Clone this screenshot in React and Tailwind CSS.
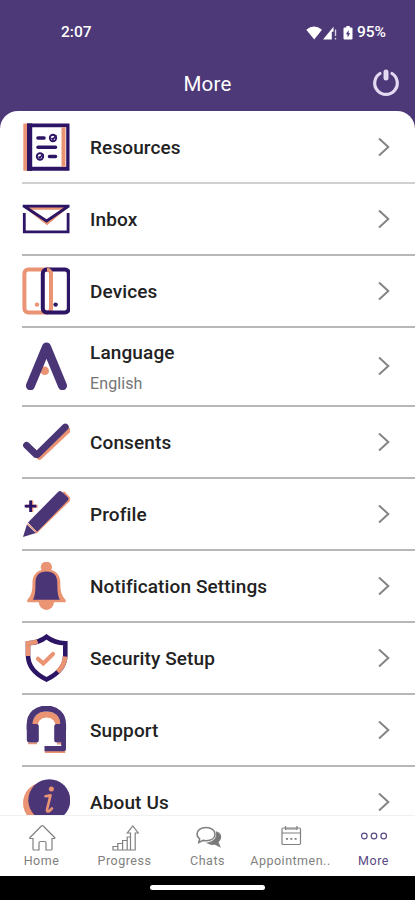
const PURPLE = '#4a3577'
const DARK = '#2d1565'
const ORANGE = '#ea9474'

function ResourcesIcon() {
  return (
    <svg viewBox="0 0 48 48" className="size-12" fill="none">
      <path d="M1.3 0.5h5v47.3h-5z" fill={ORANGE} />
      <path d="M6.5 2.4h39.2v43.2H6.5z" fill="#fff" />
      <path d="M5 0.5h42.5v47.3H5zM9.6 4.2v39.6h34.6V4.2z" fill={DARK} fillRule="evenodd" />
      <path d="M39.5 4.2h4v39.6h-4z" fill={ORANGE} />
      <path d="M5 0.5h5.2v47.3H5z" fill={DARK} />
      <g stroke={DARK} strokeWidth="3.6" strokeLinecap="round">
        <path d="M16 15h6M16 24.3h17.5M27.5 33.5h6" />
      </g>
      <circle cx="31" cy="15" r="3.2" stroke={DARK} strokeWidth="1.9" />
      <path d="M29.5 15l1.4 1.3 3.4-4" stroke={DARK} strokeWidth="1.6" />
      <circle cx="18" cy="33.5" r="3.2" stroke={DARK} strokeWidth="1.9" />
      <path d="M16.5 33.5l1.4 1.3 3.4-4" stroke={DARK} strokeWidth="1.6" />
    </svg>
  )
}

function InboxIcon() {
  return (
    <svg viewBox="0 0 48 48" className="size-12" fill="none">
      <path d="M5 12.8h38.5L25 28.4z" stroke={ORANGE} strokeWidth="3" />
      <path d="M9 13.8h30" stroke={ORANGE} strokeWidth="1.8" />
      <path d="M0.7 11.2h46.8M2.5 11.5L24.6 26 46 11.5" stroke={DARK} strokeWidth="2.8" />
      <path d="M2.3 18v18.8h43.8V18" stroke={DARK} strokeWidth="2.8" />
    </svg>
  )
}

function DevicesIcon() {
  return (
    <svg viewBox="0 0 48 48" className="size-12" fill="none">
      <rect x="2.4" y="2.6" width="26.6" height="42.8" rx="3.8" stroke={ORANGE} strokeWidth="4" />
      <rect x="20.8" y="2.6" width="26" height="42.8" rx="3.8" stroke={DARK} strokeWidth="4" />
      <path d="M25 2.6a4 4 0 0 1 4 4v32" stroke={ORANGE} strokeWidth="3.6" />
      <circle cx="15" cy="37.6" r="2.2" fill={ORANGE} />
      <circle cx="33.6" cy="37.6" r="2.2" fill={DARK} />
    </svg>
  )
}

function LanguageIcon() {
  return (
    <svg viewBox="0 0 48 48" className="size-12" fill="none">
      <circle cx="22.7" cy="28.8" r="4.3" fill={ORANGE} />
      <path d="M8.4 43.8L24.5 5l16 38.8" stroke={PURPLE} strokeWidth="9" strokeLinecap="round" strokeLinejoin="round" />
    </svg>
  )
}

function ConsentsIcon() {
  return (
    <svg viewBox="0 0 48 48" className="size-12" fill="none" strokeLinecap="round" strokeLinejoin="round">
      <path d="M10 32l7.5 7L45.7 12.3" stroke={ORANGE} strokeWidth="5.8" />
      <path d="M4.5 27.3l9.5 9.2h1.4L43.3 9" stroke={PURPLE} strokeWidth="6.8" />
    </svg>
  )
}

function ProfileIcon() {
  return (
    <svg viewBox="0 0 48 48" className="size-12" fill="none">
      <path d="M14 42.5L46.5 11q1.8-1.9 0-3.8L42 2.5z" fill={ORANGE} stroke={ORANGE} strokeWidth="2" strokeLinejoin="round" />
      <path d="M6 32.5L36 2q2-1.9 4 0l5.5 5q1.9 1.8 0 3.8L15 42z" fill={PURPLE} />
      <path d="M4.9 34.5l9 8.6L1 47z" fill={PURPLE} />
      <path d="M5.6 33.7l9.3 8.8" stroke={ORANGE} strokeWidth="1.2" />
      <path d="M9.8 10.5v11.4M4 16.2h11.6" stroke={ORANGE} strokeWidth="3" />
      <path d="M8.6 10.5v11.4M2.7 16.2h11.6" stroke={DARK} strokeWidth="2.8" />
    </svg>
  )
}

function BellIcon() {
  return (
    <svg viewBox="0 0 48 48" className="size-12" fill="none">
      <circle cx="24.4" cy="5.3" r="5.6" fill={ORANGE} />
      <path d="M10.5 20.5C10.5 12 16 7.5 24.4 7.5S38.3 12 38.3 20.5c0 9 1.2 13 5.4 17.5v2.3H5.2V38c4.2-4.5 5.3-8.5 5.3-17.5z" fill={ORANGE} />
      <path d="M16.8 40a7.6 7.9 0 0 0 15.2 0z" fill={ORANGE} />
      <path d="M13.5 20.5c0-7.2 4-11 10.9-11s10.9 3.8 10.9 11c0 8 .4 13.5 2.6 17.3H11c2.1-3.8 2.5-9.3 2.5-17.3z" fill={PURPLE} />
    </svg>
  )
}

function SecurityIcon() {
  return (
    <svg viewBox="0 0 48 48" className="size-12" fill="none" strokeWidth="4.6">
      <path d="M24.5 2.8C19 7 13 9 6 9.3V21c0 12.5 8 19.5 18.5 24.5C35 40.5 43.3 33.5 43.3 21V9.3C36 9 30 7 24.5 2.8z" stroke={DARK} />
      <path d="M15.5 7.3C12 8.7 9 9.2 6 9.3V22" stroke={ORANGE} />
      <path d="M43.2 22.5c-.4 6.5-3 11-7.5 15.3" stroke={ORANGE} />
      <path d="M16 24.8l5.3 4.7 9.7-9.5" stroke={ORANGE} strokeWidth="4.2" strokeLinecap="round" />
    </svg>
  )
}

function SupportIcon() {
  return (
    <svg viewBox="0 0 48 48" className="size-12" fill="none">
      <path d="M12.5 22C12.5 12.5 17 8.5 24.5 8.5S36.8 12.5 36.8 22" stroke={ORANGE} strokeWidth="6" />
      <path d="M6 36.5h9v1.8H6zM22.8 44.5h20.5v2.4H22.8zM35 36.8h6v1.8h-6z" fill={ORANGE} />
      <path d="M7.6 24V18.5C7.6 8.5 14.5 2.5 24.5 2.5s16.7 6 16.7 16V24" stroke={PURPLE} strokeWidth="5.8" />
      <path d="M4.8 18h9.5a2.5 2.5 0 0 1 2.5 2.5V34a2.5 2.5 0 0 1-2.5 2.5H7A2.5 2.5 0 0 1 4.8 34z" fill={PURPLE} />
      <path d="M44 18h-9.3a2.5 2.5 0 0 0-2.5 2.5V34a2.5 2.5 0 0 0 2.5 2.5h4.5v3.5H22.5v5.3h19a2.5 2.5 0 0 0 2.5-2.5z" fill={PURPLE} />
    </svg>
  )
}

function AboutIcon() {
  return (
    <svg viewBox="0 0 48 48" className="size-12" fill="none">
      <circle cx="21.5" cy="25" r="20.5" fill={ORANGE} />
      <circle cx="27.3" cy="22.2" r="21" fill={PURPLE} />
      <circle cx="29.4" cy="11" r="2.5" fill={ORANGE} />
      <path
        d="M23.5 18.2l5-.8-3.4 13.8q-.6 2.6 1.2 2.2 1.7-.5 3.7-3"
        stroke={ORANGE}
        strokeWidth="2.6"
        strokeLinecap="round"
        strokeLinejoin="round"
      />
    </svg>
  )
}

const items = [
  { label: 'Resources', Icon: ResourcesIcon },
  { label: 'Inbox', Icon: InboxIcon },
  { label: 'Devices', Icon: DevicesIcon },
  { label: 'Language', sub: 'English', Icon: LanguageIcon },
  { label: 'Consents', Icon: ConsentsIcon },
  { label: 'Profile', Icon: ProfileIcon },
  { label: 'Notification Settings', Icon: BellIcon },
  { label: 'Security Setup', Icon: SecurityIcon },
  { label: 'Support', Icon: SupportIcon },
  { label: 'About Us', Icon: AboutIcon },
]

const tabs = [
  {
    label: 'Home',
    icon: (
      <path d="M6 16.5H3Q2.5 16 3 15.5L14.4 4q.9-.8 1.8 0L27.6 15.5q.5.5 0 1H25V27q0 1-1 1h-5v-7q0-1.5-1.5-1.5h-4q-1.5 0-1.5 1.5v7H7q-1 0-1-1z" />
    ),
  },
  {
    label: 'Progress',
    icon: (
      <path d="M3 28v-3.5h4.8V28M7.8 28v-6.5h4.8V28M12.6 28v-9.5h4.6V28M17.2 28v-13h3M20.5 28V11h-3.2L22.8 4l5.4 7h-3v17zM2.5 28h22.7" />
    ),
  },
  {
    label: 'Chats',
    icon: (
      <>
        <path d="M23.5 10c3 1 4.5 3.5 4 6-.3 1.7-1.2 3-2.5 4l1.7 4.5-5-2.5c-2.5.7-5 .3-7-1 5.5-.5 10-4.5 8.8-11z" fill="#777" />
        <path d="M13 5.5c5.2 0 9 2.7 9 6.700s-3.800 6.500-9 6.500c-1 0-2-.1-3-.3L5.800 20.500l.8-3.700C5 15.700 4 14 4 12.200c0-4 3.800-6.700 9-6.700z" fill="#fff" strokeWidth="1.6" />
      </>
    ),
  },
  {
    label: 'Appointmen..',
    icon: (
      <>
        <rect x="6" y="6" width="18.5" height="16.5" rx="1.2" />
        <path d="M6 11h18.500M9.500 4v4M21 4v4M10 7h10.500" />
        <path d="M10 16.800h11" strokeWidth="1.8" strokeDasharray="2 2.3" />
      </>
    ),
  },
  {
    label: 'More',
    active: true,
    icon: (
      <>
        <circle cx="5.3" cy="14" r="2.8" />
        <circle cx="15" cy="14" r="2.8" />
        <circle cx="24.7" cy="14" r="2.8" />
      </>
    ),
  },
]

function StatusBar() {
  return (
    <div className="flex h-[56px] items-center justify-between pt-[9px] pr-[29px] pl-[61px] text-[15.5px] font-medium text-white">
      <span>2:07</span>
      <div className="flex items-center">
        <svg viewBox="0 0 48 16" className="mr-px h-4 w-12" fill="#fff">
          <path d="M0.3 4.8Q8 -1.8 16 4.8L8.2 14.5z" />
          <path d="M27.5 1.8v5h-1.7v7.7H17z" />
          <path d="M28.8 4.5h1.4v6.5h-1.4zM28.8 12.7h1.4v1.8h-1.4z" opacity=".75" />
          <path d="M40.3 1h3.5v1.5h1.7q1 0 1 1v10q0 1-1 1h-7q-1 0-1-1v-10q0-1 1-1h1.8z" />
          <path d="M42.6 5l-2.6 4.3h1.5V12.5l2.6-4.3h-1.5z" fill={PURPLE} />
        </svg>
        <span className="ml-[2px]">95%</span>
      </div>
    </div>
  )
}

function Header() {
  return (
    <div className="grid h-[55px] grid-cols-[1fr_auto_1fr] items-center text-white">
      <span />
      <h1 className="pt-0.5 text-[20.5px] tracking-[0.2px]">More</h1>
      <svg
        viewBox="0 0 28 28"
        className="mr-[15px] mb-[2px] size-7 justify-self-end"
        fill="none"
        stroke="#e3d9f0"
        strokeLinecap="round"
      >
        <path d="M8 4.500A11.300 11.300 0 1 0 20 4.500" strokeWidth="3.2" />
        <path d="M14 3v6" strokeWidth="5" />
      </svg>
    </div>
  )
}

function MenuRow({ label, sub, Icon }) {
  return (
    <li
      className={`ml-[22px] flex shrink-0 items-center border-b-2 border-[#b8b8b8] pr-[24px] first:border-[#d0d0d0] ${
        sub ? 'h-[78.5px]' : 'h-[72px]'
      }`}
    >
      <Icon />
      <div className={`ml-5 flex flex-1 flex-col ${sub ? 'pt-1' : 'pt-0.5'}`}>
        <span className="text-[19px] leading-6 font-medium tracking-[0.12px] text-[#222]">{label}</span>
        {sub && <span className="mt-[7px] text-[16px] leading-6 tracking-[0.1px] text-[#757575]">{sub}</span>}
      </div>
      <svg viewBox="0 0 14 20" className="h-5 w-3.5" fill="none" stroke="#858585" strokeWidth="2">
        <path d="M2 1.5l9.3 8.5L2 18.5" />
      </svg>
    </li>
  )
}

function TabBar() {
  return (
    <nav className="grid h-[61px] shrink-0 grid-cols-5 border-t border-[#f0f0f0] bg-white">
      {tabs.map((tab) => (
        <div
          key={tab.label}
          className={`flex flex-col items-center pt-[7px] ${tab.active ? 'text-[#594985]' : 'text-[#808080]'}`}
        >
          <svg viewBox="0 0 30 30" className="-mt-px mb-px size-[30px]" fill="none" stroke="currentColor" strokeWidth="1.2">
            {tab.icon}
          </svg>
          <span className="text-[12.5px] leading-4 tracking-[0.5px]">{tab.label}</span>
        </div>
      ))}
    </nav>
  )
}

export default function App() {
  return (
    <div className="flex h-[900px] w-[415px] flex-col overflow-hidden bg-[#4d3878] font-['Roboto',sans-serif]">
      <StatusBar />
      <Header />
      <ul className="flex min-h-0 flex-1 flex-col overflow-hidden rounded-t-[18px] bg-white pt-px">
        {items.map((item) => (
          <MenuRow key={item.label} {...item} />
        ))}
      </ul>
      <TabBar />
      <div className="flex h-6 shrink-0 justify-center bg-black pt-[9px]">
        <div className="h-[5px] w-[115px] rounded-full bg-white" />
      </div>
    </div>
  )
}
